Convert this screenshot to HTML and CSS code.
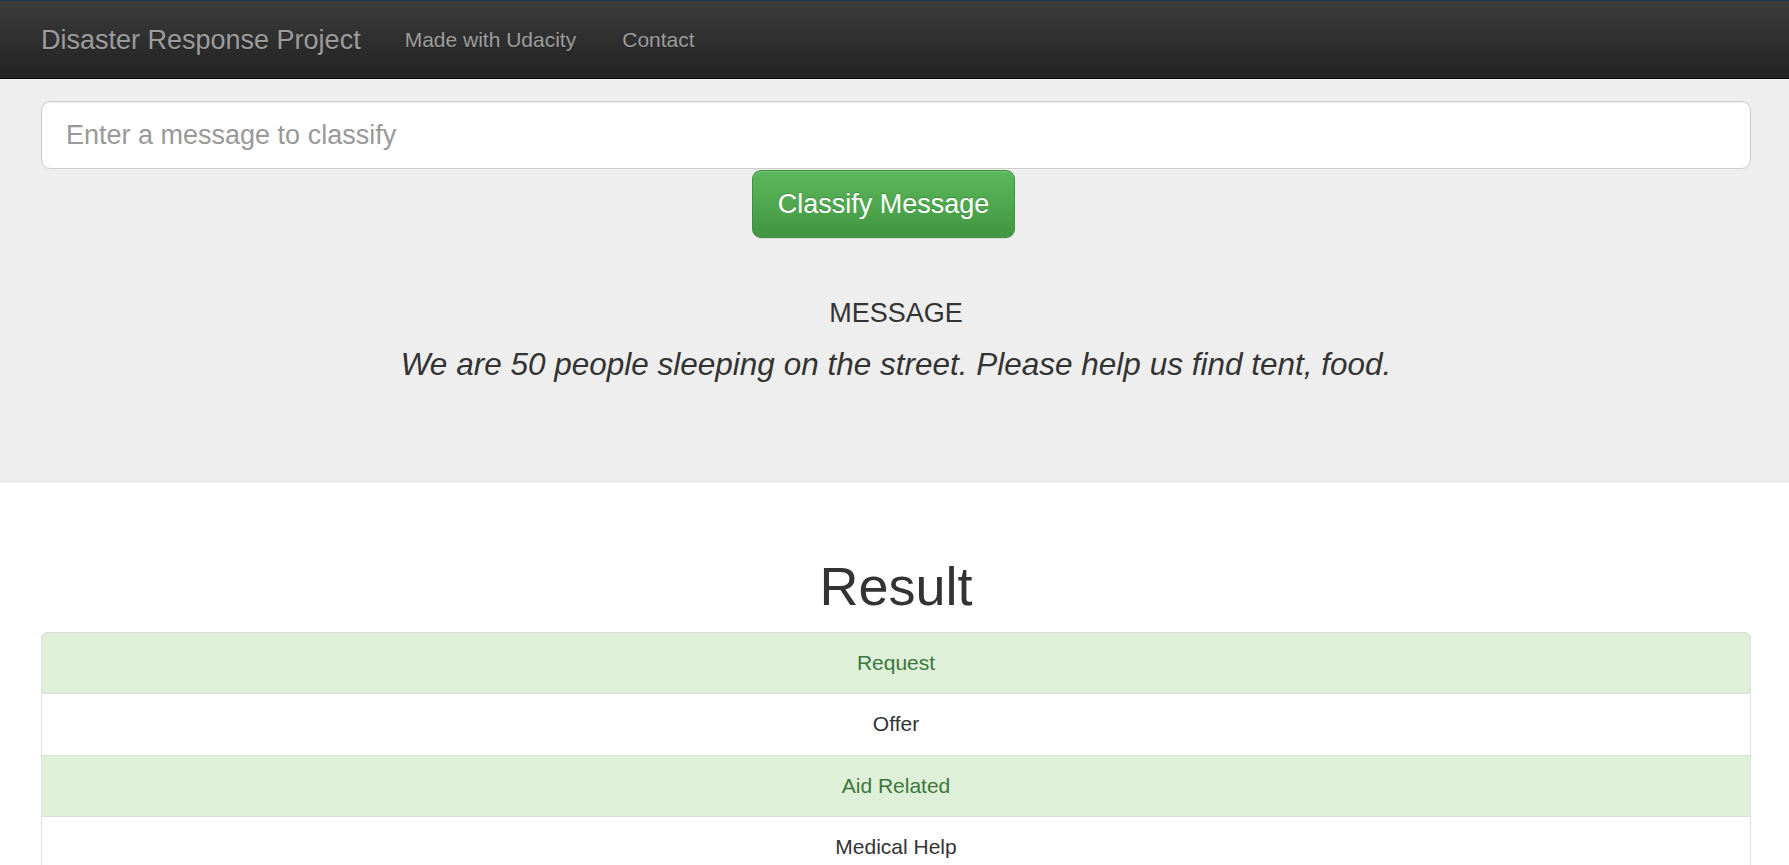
FILE: index.html
```html
<!DOCTYPE html>
<html lang="en">
<head>
<meta charset="utf-8">
<title>Disaster Response Project</title>
<link rel="stylesheet" href="styles.css">
</head>
<body>
<div class="topline"></div>
<nav class="navbar">
  <a class="brand" href="#">Disaster Response Project</a>
  <ul class="nav-links">
    <li><a href="#">Made with Udacity</a></li>
    <li><a href="#">Contact</a></li>
  </ul>
</nav>
<section class="jumbotron">
  <div class="container">
    <form class="classify-form">
      <input class="message-input" type="text" placeholder="Enter a message to classify">
      <button class="btn-success" type="button">Classify Message</button>
    </form>
    <h4 class="msg-label">MESSAGE</h4>
    <p class="msg-text">We are 50 people sleeping on the street. Please help us find tent, food.</p>
  </div>
</section>
<main class="container results">
  <h1 class="result-title">Result</h1>
  <ul class="list-group">
    <li class="list-item success">Request</li>
    <li class="list-item">Offer</li>
    <li class="list-item success">Aid Related</li>
    <li class="list-item">Medical Help</li>
  </ul>
</main>
</body>
</html>
```

FILE: styles.css
```css
* { box-sizing: border-box; }
html, body { margin: 0; padding: 0; }
body {
  font-family: "Liberation Sans", Arial, sans-serif;
  color: #333;
  background: #fff;
}
.topline { height: 1px; background: #1f3659; }
.navbar {
  height: 78px;
  border-bottom: 1px solid #080808;
  background: linear-gradient(to bottom, #3c3c3c 0%, #222 100%);
  display: flex;
  align-items: center;
  padding: 1px 0 0 41px;
}
.brand {
  font-size: 27px;
  color: #9d9d9d;
  text-decoration: none;
  text-shadow: 0 1px 0 rgba(0,0,0,.25);
  margin-right: 21px;
}
.nav-links { list-style: none; margin: 0; padding: 0; display: flex; }
.nav-links a {
  display: block;
  padding: 0 23px;
  font-size: 21px;
  color: #9d9d9d;
  text-decoration: none;
  text-shadow: 0 1px 0 rgba(0,0,0,.25);
}
.container { margin: 0 38px 0 41px; }
.jumbotron {
  background: #eee;
  padding: 22px 0 102px;
}
.classify-form { display: flex; flex-direction: column; align-items: center; }
.message-input {
  width: 100%;
  height: 68px;
  border: 1px solid #ccc;
  border-radius: 9px;
  padding: 0 24px;
  font-family: inherit;
  font-size: 27px;
  color: #555;
  background: #fff;
  box-shadow: inset 0 1px 1px rgba(0,0,0,.075);
  outline: none;
}
.message-input::placeholder { color: #999; }
.btn-success {
  margin: 1px 25px 0 0;
  height: 68px;
  padding: 0 25px;
  font-family: inherit;
  font-size: 27px;
  color: #fff;
  border: 1px solid #3e8f3e;
  border-radius: 9px;
  background: linear-gradient(to bottom, #5cb85c 0%, #419641 100%);
  box-shadow: inset 0 1px 0 rgba(255,255,255,.15), 0 1px 1px rgba(0,0,0,.075);
  text-shadow: 0 -1px 0 rgba(0,0,0,.2);
  cursor: pointer;
}
.msg-label {
  margin: 61px 0 0;
  text-align: center;
  font-size: 27px;
  font-weight: 400;
  line-height: 1.1;
  color: #333;
}
.msg-text {
  margin: 18px 0 0;
  text-align: center;
  font-size: 31.5px;
  font-style: italic;
  line-height: 1.1;
  color: #333;
}
.result-title {
  margin: 74px 0 15px;
  text-align: center;
  font-size: 54px;
  font-weight: 500;
  line-height: 1.1;
  color: #333;
}
.list-group { list-style: none; margin: 0; padding: 0; }
.list-item {
  padding: 15px 22px;
  line-height: 30.5px;
  font-size: 21px;
  text-align: center;
  color: #333;
  background: #fff;
  border: 1px solid #ddd;
  margin-bottom: -1px;
}
.list-item:first-child { border-top-left-radius: 6px; border-top-right-radius: 6px; }
.list-item.success { background: #dff0d8; color: #3c763d; }
```
